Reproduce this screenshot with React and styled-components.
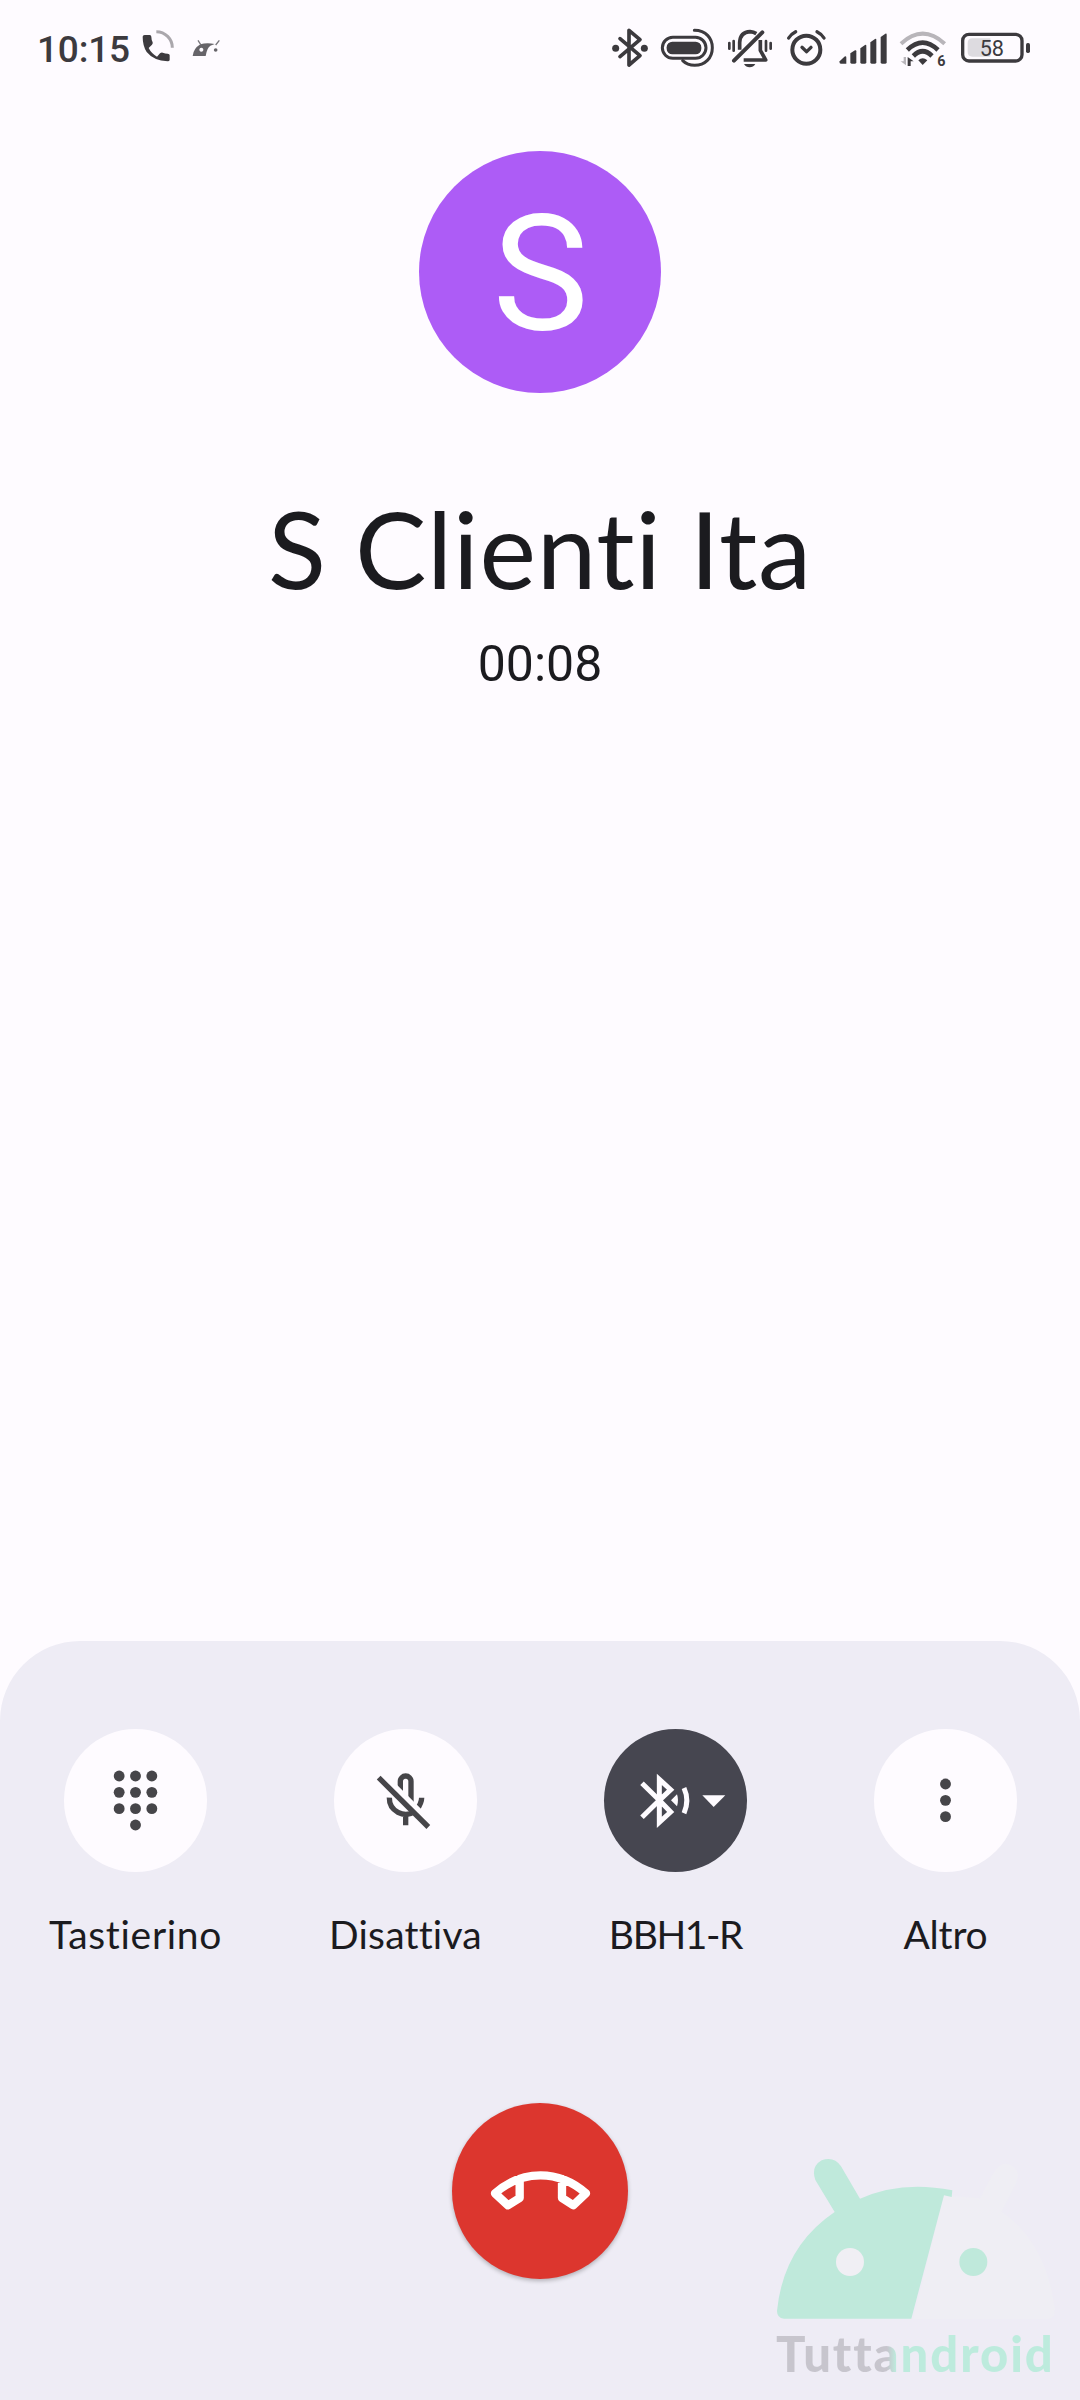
import styled, { createGlobalStyle } from 'styled-components'

const GlobalStyle = createGlobalStyle`
body {
    margin: 0;
    background-color: #fefbff;
}
`
const Container = styled.div`
display: flex;
flex-direction: column;
width: 1080px;
height: 2400px;
overflow: hidden;
position: relative;
background-color: #fefbff;
color: #1b1b1f;
font-family: Lato, "Liberation Sans", sans-serif;
`
const StatusBar = styled.div`
display: flex;
justify-content: space-between;
height: 80px;
padding: 10px 40px 0 37px;
color: #3c3a3e;
`
const StatusGroup = styled.div`
display: flex;
`
const Clock = styled.div`
width: 103px;
font-family: Roboto, sans-serif;
font-size: 37px;
font-weight: 500;
line-height: 79px;
letter-spacing: -0.2px;
white-space: nowrap;
`
const StatusIcon = styled.svg`
display: block;
height: 80px;
width: ${(props) => props.$width}px;
flex-shrink: 0;
`
const SmallText = styled.text`
font-family: Roboto, sans-serif;
font-size: ${(props) => props.$size}px;
font-weight: ${(props) => props.$weight || 400};
fill: #3c3a3e;
`
const Caller = styled.div`
display: flex;
flex: 1;
flex-direction: column;
align-items: center;
padding-top: 61px;
`
const Avatar = styled.div`
display: flex;
align-items: center;
justify-content: center;
box-sizing: border-box;
width: 242px;
height: 242px;
padding: 4px 0 0 1px;
border-radius: 50%;
background-color: #ad5cf6;
color: white;
font-family: Roboto, sans-serif;
font-size: 162px;
line-height: 238px;
`
const Name = styled.h1`
margin: 85px 0 0;
font-size: 107px;
font-weight: 400;
line-height: 140px;
letter-spacing: 0.7px;
white-space: nowrap;
`
const Timer = styled.div`
margin-top: 16px;
font-family: Roboto, sans-serif;
font-size: 50px;
line-height: 60px;
`
const Panel = styled.div`
display: flex;
flex-direction: column;
align-items: center;
box-sizing: border-box;
height: 759px;
padding-top: 88px;
border-radius: 80px 80px 0 0;
background-color: #eeecf5;
`
const Actions = styled.div`
display: grid;
grid-template-columns: repeat(4, 270px);
`
const Action = styled.div`
display: flex;
flex-direction: column;
align-items: center;
`
const RoundButton = styled.button`
display: block;
width: 143px;
height: 143px;
padding: 0;
border: none;
border-radius: 50%;
background-color: ${(props) => (props.$active ? '#464650' : '#fefbff')};
color: ${(props) => (props.$active ? '#fefbff' : '#464549')};
cursor: pointer;
`
const ButtonIcon = styled.svg`
display: block;
width: 100%;
height: 100%;
`
const Label = styled.span`
margin-top: 38px;
padding-left: 1px;
font-size: 39px;
line-height: 48px;
letter-spacing: ${(props) => props.$spacing || 0}px;
white-space: nowrap;
`
const HangUp = styled.button`
width: 176px;
height: 176px;
margin-top: 145px;
padding: 0;
border: none;
border-radius: 50%;
background-color: #dc362e;
box-shadow: 0 2px 4px rgba(0, 0, 0, 0.25);
cursor: pointer;
`
const Watermark = styled.div`
position: absolute;
right: 0;
bottom: 0;
width: 330px;
height: 270px;
`
const WatermarkLogo = styled.svg`
display: block;
width: 330px;
height: 192px;
`
const WatermarkText = styled.div`
width: 290px;
margin: 1px 0 0 26px;
background-image: linear-gradient(90deg, #c7c5cd 111px, #bdebdd 120px);
background-clip: text;
color: transparent;
font-size: 49px;
font-weight: 900;
line-height: 60px;
letter-spacing: 1.9px;
white-space: nowrap;
`

const CallIcon = () => (
    <StatusIcon $width={40} viewBox="420 0 120 240">
        <path fill="currentColor" d="M434 75 h15 q5 0 5 5 q0 9 4 17 q1 4-2 7 l-10 10 q8 16 25 26 l9-10 q4-3 8-2 q8 3 15 3 q6 0 6 5 v13 q0 5-6 5 Q461 152 440 126 Q428 107 428 80 q0-5 6-5z" />
        <path fill="none" stroke="#aaa7ac" strokeWidth="9" d="M469 65 A48 48 0 0 1 517 113" />
    </StatusIcon>
)

const AndroidIcon = () => (
    <StatusIcon $width={50} viewBox="540 0 150 240">
        <path fill="#666469" fillRule="evenodd" d="M578 138 Q580 116 601 103 Q620 97 644 102 L631 107 Q621 113 617 138z M604 113 a6 6 0 1 0 .1 0z" />
        <path stroke="#77757a" strokeWidth="4" d="M594 91 l9 14 M658 91 l-11 14" />
        <circle cx="647" cy="120" r="5.5" fill="#666469" />
    </StatusIcon>
)

const BluetoothStatusIcon = () => (
    <StatusIcon $width={40} viewBox="60 0 120 240">
        <path fill="none" stroke="currentColor" strokeWidth="11" strokeLinejoin="round" strokeLinecap="round" d="M90 86 L150 137 L117 165 V61 L150 89 L90 140" />
        <circle cx="77" cy="115" r="10.5" fill="currentColor" />
        <circle cx="163" cy="115" r="10.5" fill="currentColor" />
    </StatusIcon>
)

const PillIcon = () => (
    <StatusIcon $width={70} viewBox="180 0 210 240">
        <path fill="none" stroke="currentColor" strokeWidth="9" strokeLinecap="round" d="M313 61 C349 61 367 86 367 113 C367 144 345 166 314 166 C299 166 288 162 278 152" />
        <rect x="217" y="82" width="131" height="63" rx="31.5" fill="#fefbff" stroke="currentColor" strokeWidth="9" />
        <rect x="230" y="95" width="104" height="38" rx="17" fill="currentColor" />
    </StatusIcon>
)

const SilentIcon = () => (
    <StatusIcon $width={60} viewBox="390 0 180 240">
        <g fill="none" stroke="currentColor" strokeWidth="11">
            <path d="M449 119 V97 Q451 66 480 65 Q491 66 499 71" />
            <path strokeLinejoin="round" d="M511 90 V121 L527 150 H461" />
            <path strokeWidth="12" strokeLinecap="round" d="M432 152 L517 67" />
            <path strokeWidth="8" strokeLinecap="round" d="M418 99 V116 M431 93 V122 M528 93 V122 M542 99 V116" />
        </g>
        <path fill="currentColor" d="M462 162 H496 Q490 172 479 172 Q468 172 462 162z" />
    </StatusIcon>
)

const AlarmIcon = () => (
    <StatusIcon $width={50} viewBox="570 0 150 240">
        <g fill="none" stroke="currentColor" strokeWidth="10" strokeLinecap="round">
            <circle cx="649" cy="119" r="42" strokeWidth="12" />
            <path strokeLinejoin="round" d="M636 112 L650 125 L663 112" />
            <path d="M596 84 Q603 72 617 65 M681 65 Q695 72 702 84" />
        </g>
    </StatusIcon>
)

const SignalIcon = () => (
    <StatusIcon $width={60} viewBox="30 0 180 240">
        <path fill="currentColor" d="M59 154 L73 140 q6-3 6 3 V161 H62 q-5 0-3-7z" />
        <path fill="currentColor" d="M91 130 L105 121 q4-2 4 3 V157 q0 4-4 4 H95 q-4 0-4-4z" />
        <path fill="currentColor" d="M121 115 L135 105 q4-2 4 3 V157 q0 4-4 4 H125 q-4 0-4-4z" />
        <path fill="currentColor" d="M151 97 L165 87 q4-2 4 3 V157 q0 4-4 4 H155 q-4 0-4-4z" />
        <path fill="currentColor" d="M182 81 L196 71 q4-2 4 3 V157 q0 4-4 4 H186 q-4 0-4-4z" />
    </StatusIcon>
)

const WifiIcon = () => (
    <StatusIcon $width={60} viewBox="210 0 180 240">
        <g fill="none" strokeWidth="14">
            <path stroke="#b8b5ba" strokeWidth="12" d="M243 101 Q308 41 374 101" />
            <path stroke="currentColor" d="M262 120 Q308 76 354 120" />
            <path stroke="currentColor" d="M280 138 Q308 110 336 138" />
        </g>
        <path fill="currentColor" d="M295 151 Q308 138 322 151 L308 165z" />
        <path fill="#b8b5ba" d="M251 141 h7 v25 l-16-12 h9z" />
        <path fill="currentColor" d="M263 168 V141 L281 154 H272 V168z" />
        <SmallText x="352" y="167" $size={43} $weight={700}>6</SmallText>
    </StatusIcon>
)

const BatteryIcon = () => (
    <StatusIcon $width={90} viewBox="390 0 270 240">
        <path fill="#dddbe0" d="M457 85 h54 v55 h-54 q-14 0-14-14 v-27 q0-14 14-14z" />
        <rect x="428" y="73" width="178" height="80" rx="19" fill="none" stroke="currentColor" strokeWidth="10" />
        <rect x="618" y="99" width="12" height="30" rx="5" fill="currentColor" />
        <SmallText x="479" y="139" $size={65}>58</SmallText>
    </StatusIcon>
)

const KeypadIcon = () => (
    <ButtonIcon viewBox="72 87 429 429" fill="currentColor">
        {[228, 277, 326].map((y) => [237.5, 286.5, 335.5].map((x) => (
            <circle key={`${x}-${y}`} cx={x} cy={y} r="16.3" />
        )))}
        <circle cx="286.5" cy="375" r="16.3" />
    </ButtonIcon>
)

const MicOffIcon = () => (
    <ButtonIcon viewBox="882 87 429 429" fill="none" stroke="currentColor" strokeWidth="16">
        <path d="M1081 280 V244 a16 16 0 0 1 32 0 V310" />
        <path d="M1145 293 Q1145 308 1130 330" />
        <path stroke="#fefbff" strokeWidth="16" d="M1025 220 L1170 365" />
        <path d="M1048 293 A49 49 0 0 0 1125 334 M1097 340 V376" />
        <path d="M1016 233 L1165 381" />
    </ButtonIcon>
)

const BluetoothAudioIcon = () => (
    <ButtonIcon viewBox="72 87 429 429" fill="currentColor">
        <g fill="none" stroke="currentColor" strokeWidth="15">
            <path d="M186 250 L238 301 L186 352" />
            <path d="M238 238 L272 269 L238 301 L272 336 L238 367z" />
            <path d="M312 264 Q329 301 312 340" />
        </g>
        <path d="M273 301 L291 283 Q297 301 291 319z" />
        <path d="M367 286 H436 L401 321z" />
    </ButtonIcon>
)

const MoreIcon = () => (
    <ButtonIcon viewBox="882 87 429 429" fill="currentColor">
        <circle cx="1096.5" cy="252" r="16.3" />
        <circle cx="1096.5" cy="301" r="16.3" />
        <circle cx="1096.5" cy="350" r="16.3" />
    </ButtonIcon>
)

const HangUpIcon = () => (
    <ButtonIcon viewBox="96 98 528 528" fill="none" stroke="#fff" strokeWidth="25" strokeLinejoin="round">
        <path d="M225 369 Q286 315 361.500 315 Q437 315 498 369 L460 405 L426 383 V326 V383 L460 405 L498 369 Q437 315 361.500 315 Q286 315 225 369 L264 405 L299 383 V326 V383 L264 405z" />
    </ButtonIcon>
)

const actions = [
    { label: 'Tastierino', icon: <KeypadIcon />, spacing: 0.7 },
    { label: 'Disattiva', icon: <MicOffIcon />, spacing: 0.2 },
    { label: 'BBH1-R', icon: <BluetoothAudioIcon />, spacing: -1.4, active: true },
    { label: 'Altro', icon: <MoreIcon />, spacing: -0.2 },
]

const App = () => {
    return (
        <Container>
            <GlobalStyle />
            <StatusBar>
                <StatusGroup>
                    <Clock>10:15</Clock>
                    <CallIcon />
                    <AndroidIcon />
                </StatusGroup>
                <StatusGroup>
                    <BluetoothStatusIcon />
                    <PillIcon />
                    <SilentIcon />
                    <AlarmIcon />
                    <SignalIcon />
                    <WifiIcon />
                    <BatteryIcon />
                </StatusGroup>
            </StatusBar>
            <Caller>
                <Avatar>S</Avatar>
                <Name>S Clienti Ita</Name>
                <Timer>00:08</Timer>
            </Caller>
            <Panel>
                <Actions>
                    {actions.map((action) => (
                        <Action key={action.label}>
                            <RoundButton $active={action.active} aria-label={action.label}>{action.icon}</RoundButton>
                            <Label $spacing={action.spacing}>{action.label}</Label>
                        </Action>
                    ))}
                </Actions>
                <HangUp aria-label="Riaggancia"><HangUpIcon /></HangUp>
            </Panel>
            <Watermark>
                <WatermarkLogo viewBox="0 0 990 576">
                    <path fill="#efeef4" d="M490 566 L582 195 L606 198 L690 205 L730 130 Q757 85 790 110 Q815 130 795 165 L755 245 Q890 340 915 540 Q915 566 895 566z" />
                    <path fill="#bfe9db" d="M254 246 L196 150 Q182 110 215 91 Q252 78 273 109 L330 206 Q455 150 607 181 L605 201 L582 196 L484 566 H102 Q81 564 81 543 Q100 350 254 246z" />
                    <circle cx="300" cy="396" r="42" fill="#f0eff4" />
                    <circle cx="670" cy="396" r="42" fill="#bfe9db" />
                </WatermarkLogo>
                <WatermarkText>Tuttandroid</WatermarkText>
            </Watermark>
        </Container>
    )
}

export default App
